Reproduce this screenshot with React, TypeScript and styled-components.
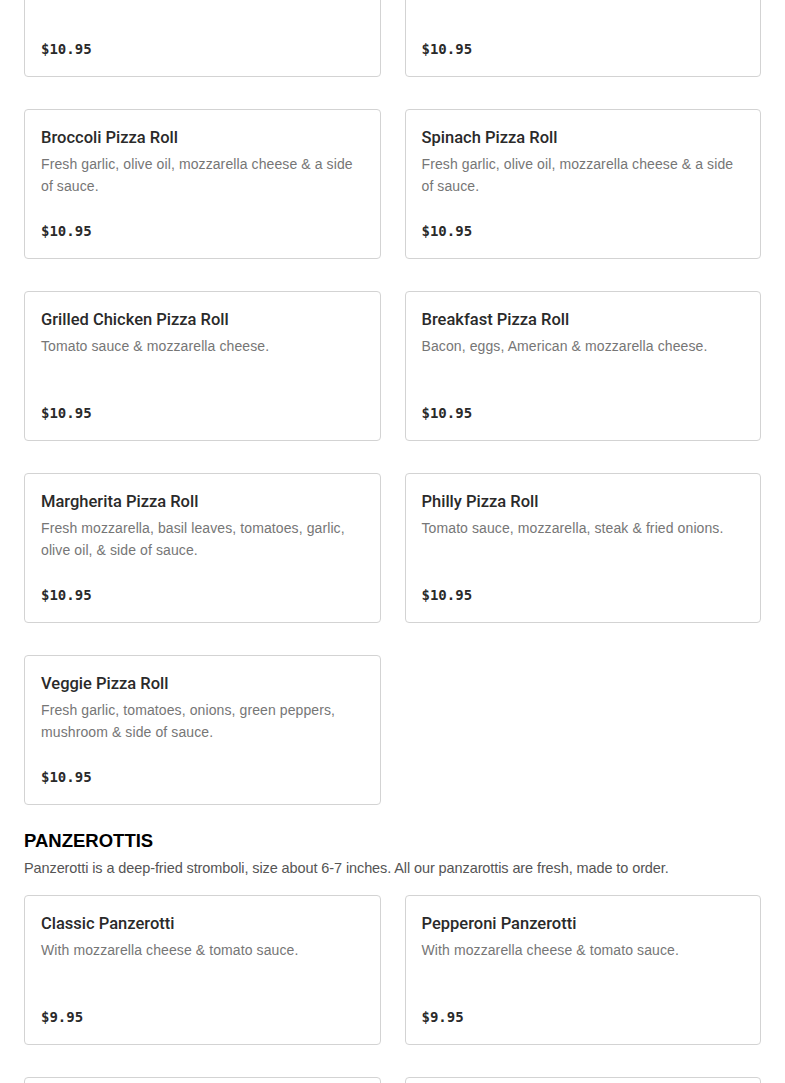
import React from "react";
import styled, { createGlobalStyle } from "styled-components";

const Global = createGlobalStyle`
  html, body { margin: 0; padding: 0; background: #ffffff; }
  body { font-family: "Liberation Sans", Arial, sans-serif; }
  * { box-sizing: border-box; }
`;

const Page = styled.div`
  padding: 0 24px;
  margin-top: -73px;
  overflow: hidden;
`;

const Grid = styled.div`
  display: grid;
  grid-template-columns: 1fr 1fr;
  column-gap: 24px;
  row-gap: 32px;
`;

const Card = styled.div`
  display: flex;
  flex-direction: column;
  height: 150px;
  padding: 16px;
  border: 1px solid #d3d3d3;
  border-radius: 4px;
  background: #fff;
`;

const Title = styled.div`
  font-family: Roboto, "Liberation Sans", Arial, sans-serif;
  font-size: 16.5px;
  line-height: 24px;
  font-weight: 500;
  color: #2a2a2a;
`;

const Desc = styled.div`
  margin-top: 3px;
  font-size: 14px;
  line-height: 22px;
  letter-spacing: 0.1px;
  color: #767676;
`;

const Price = styled.div`
  margin-top: auto;
  font-family: "DejaVu Sans Mono", "Liberation Mono", monospace;
  font-weight: bold;
  font-size: 14px;
  line-height: 20px;
  color: #2a2a2a;
  transform: translateY(-1px);
`;

const SectionHead = styled.div`
  margin-top: 24px;
  margin-bottom: 16px;
`;

const SectionTitle = styled.h2`
  margin: 0;
  font-family: "Liberation Sans", Arial, sans-serif;
  font-weight: 900;
  font-size: 18.5px;
  line-height: 24px;
  color: #000;
  text-transform: uppercase;
`;

const SectionDesc = styled.p`
  margin: 4px 0 0;
  font-size: 14.5px;
  line-height: 22px;
  letter-spacing: -0.1px;
  color: #555;
`;

type Item = { name: string; desc: string; price: string };

const rolls: Item[] = [
  { name: "Pepperoni Pizza Roll", desc: "Tomato sauce, pepperoni & mozzarella cheese.", price: "$10.95" },
  { name: "Sausage Pizza Roll", desc: "Tomato sauce, sausage & mozzarella cheese.", price: "$10.95" },
  { name: "Broccoli Pizza Roll", desc: "Fresh garlic, olive oil, mozzarella cheese & a side of sauce.", price: "$10.95" },
  { name: "Spinach Pizza Roll", desc: "Fresh garlic, olive oil, mozzarella cheese & a side of sauce.", price: "$10.95" },
  { name: "Grilled Chicken Pizza Roll", desc: "Tomato sauce & mozzarella cheese.", price: "$10.95" },
  { name: "Breakfast Pizza Roll", desc: "Bacon, eggs, American & mozzarella cheese.", price: "$10.95" },
  { name: "Margherita Pizza Roll", desc: "Fresh mozzarella, basil leaves, tomatoes, garlic, olive oil, & side of sauce.", price: "$10.95" },
  { name: "Philly Pizza Roll", desc: "Tomato sauce, mozzarella, steak & fried onions.", price: "$10.95" },
  { name: "Veggie Pizza Roll", desc: "Fresh garlic, tomatoes, onions, green peppers, mushroom & side of sauce.", price: "$10.95" },
];

const panz: Item[] = [
  { name: "Classic Panzerotti", desc: "With mozzarella cheese & tomato sauce.", price: "$9.95" },
  { name: "Pepperoni Panzerotti", desc: "With mozzarella cheese & tomato sauce.", price: "$9.95" },
  { name: "Sausage Panzerotti", desc: "With mozzarella cheese & tomato sauce.", price: "$9.95" },
  { name: "Veggie Panzerotti", desc: "With mozzarella cheese & tomato sauce.", price: "$9.95" },
];

const MenuCard = ({ item }: { item: Item }) => (
  <Card>
    <Title>{item.name}</Title>
    <Desc>{item.desc}</Desc>
    <Price>{item.price}</Price>
  </Card>
);

export default function App() {
  return (
    <>
      <Global />
      <Page>
        <Grid>
          {rolls.map((r) => (
            <MenuCard key={r.name} item={r} />
          ))}
        </Grid>
        <SectionHead>
          <SectionTitle>Panzerottis</SectionTitle>
          <SectionDesc>
            Panzerotti is a deep-fried stromboli, size about 6-7 inches. All our panzarottis are fresh, made to order.
          </SectionDesc>
        </SectionHead>
        <Grid>
          {panz.map((r) => (
            <MenuCard key={r.name} item={r} />
          ))}
        </Grid>
      </Page>
    </>
  );
}
